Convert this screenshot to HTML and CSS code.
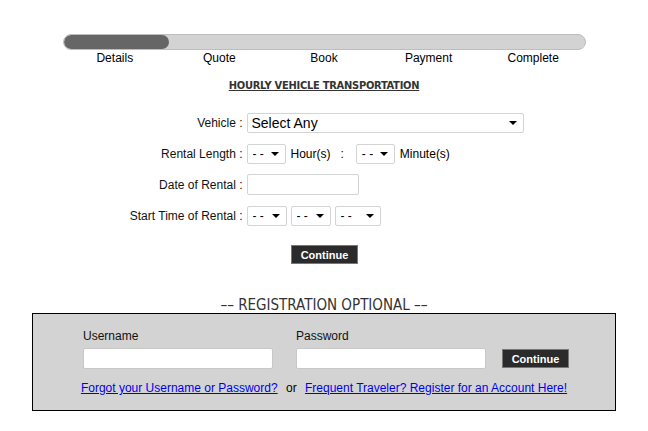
FILE: index.html
```html
<!DOCTYPE html>
<html lang="en">
<head>
  <meta charset="UTF-8" />
  <title>Hourly Vehicle Transportation</title>
  <link rel="stylesheet" href="styles.css">
</head>
<body>
  <div class="wrap">
    <div class="progress">
      <div class="progress-fill"></div>
    </div>
    <div class="steps">
      <span>Details</span>
      <span>Quote</span>
      <span>Book</span>
      <span>Payment</span>
      <span>Complete</span>
    </div>

    <h2 class="title">HOURLY VEHICLE TRANSPORTATION</h2>

    <div class="form">
      <div class="row">
        <label>Vehicle :</label>
        <span class="sel wide"><select><option>Select Any</option></select></span>
      </div>
      <div class="row">
        <label>Rental Length :</label>
        <span class="sel small"><select><option>- -</option></select></span>
        <span class="unit">Hour(s)</span>
        <span class="colon">:</span>
        <span class="sel small"><select><option>- -</option></select></span>
        <span class="unit">Minute(s)</span>
      </div>
      <div class="row">
        <label>Date of Rental :</label>
        <input class="date" type="text" />
      </div>
      <div class="row">
        <label>Start Time of Rental :</label>
        <span class="sel time"><select><option>- -</option></select></span>
        <span class="sel time"><select><option>- -</option></select></span>
        <span class="sel ampm"><select><option>- -</option></select></span>
      </div>
    </div>

    <div class="actions">
      <button class="btn">Continue</button>
    </div>
  </div>

  <h3 class="reg-title">&ndash;&ndash; REGISTRATION OPTIONAL &ndash;&ndash;</h3>
  <div class="reg-box">
    <div class="reg-fields">
      <div class="field">
        <label>Username</label>
        <input type="text" />
      </div>
      <div class="field">
        <label>Password</label>
        <input type="password" />
      </div>
      <button class="btn">Continue</button>
    </div>
    <div class="reg-links">
      <a href="#">Forgot your Username or Password?</a>
      <span>or</span>
      <a href="#">Frequent Traveler? Register for an Account Here!</a>
    </div>
  </div>
</body>
</html>
```

FILE: styles.css
```css
* { box-sizing: border-box; }
body { margin: 0; padding-top: 34px; font-family: "Liberation Sans", Arial, sans-serif; font-size: 12px; color: #000; background: #fff; }
.wrap { width: 523px; margin: 0 auto; }

.progress { height: 16px; background: #d3d3d3; border: 1px solid #bdbdbd; border-radius: 8px; overflow: hidden; }
.progress-fill { width: 105px; height: 100%; background: #666; border-radius: 8px; }
.steps { display: grid; grid-template-columns: repeat(5, 1fr); text-align: center; font-size: 12px; line-height: 14px; margin-top: 1px; }

.title { margin: 14px 0 0; text-align: center; font-family: "DejaVu Sans Condensed", sans-serif; font-size: 11px; font-weight: bold; letter-spacing: -0.25px; color: #333; text-decoration: underline; line-height: 14px; }

.form { margin-top: 19px; }
.row { display: flex; align-items: center; height: 21px; margin-bottom: 10px; }
.row label { width: 184px; padding-right: 4px; text-align: right; color: #111; }

.sel { position: relative; display: inline-block; height: 20px; }
.sel select { appearance: none; -webkit-appearance: none; width: 100%; height: 100%; margin: 0; padding: 0 0 0 5px; border: 1px solid #d4d4d4; border-radius: 2px; background: #fff; font-family: inherit; font-size: 12px; color: #000; }
.sel::after { content: ""; position: absolute; right: 7px; top: 8px; border-left: 4px solid transparent; border-right: 4px solid transparent; border-top: 4px solid #000; pointer-events: none; }
.sel.wide { width: 277px; }
.sel.wide select { font-size: 14px; padding-left: 4px; }
.sel.small { width: 39px; }
.sel.time { width: 40px; margin-right: 4px; }
.sel.ampm { width: 46px; }
.unit { margin-left: 5px; }
.colon { margin: 0 12px 0 10px; }

.date { width: 112px; height: 21px; margin: 0; border: 1px solid #d4d4d4; border-radius: 2px; }

.actions { text-align: center; margin-top: 19px; }
.btn { height: 19px; padding: 0 8px; background: #2b2b2b; color: #fff; border: 1px solid #777; border-radius: 0; font-family: "Liberation Sans", Arial, sans-serif; font-size: 11px; font-weight: bold; cursor: pointer; }
.actions .btn { width: 67px; margin-left: 1px; }

.reg-title { margin: 34px 0 0; text-align: center; font-family: "DejaVu Sans Condensed", sans-serif; font-size: 15px; font-weight: normal; color: #333; line-height: 15px; }
.reg-box { width: 584px; margin: 0 auto; padding: 15px 0 15px; background: #d3d3d3; border: 1px solid #000; }
.reg-fields { display: flex; align-items: flex-end; padding-left: 50px; }
.field { display: flex; flex-direction: column; margin-right: 23px; }
.field label { font-size: 12px; color: #111; line-height: 14px; margin-bottom: 5px; }
.field input { width: 190px; height: 21px; margin: 0; border: 1px solid #c8c8c8; border-radius: 2px; background: #fff; }
.reg-fields .btn { width: 67px; margin-left: -7px; margin-bottom: 1px; }
.reg-links { margin-top: 12px; text-align: center; font-size: 12px; }
.reg-links a { color: #00e; }
.reg-links span { margin: 0 5px; }
```
